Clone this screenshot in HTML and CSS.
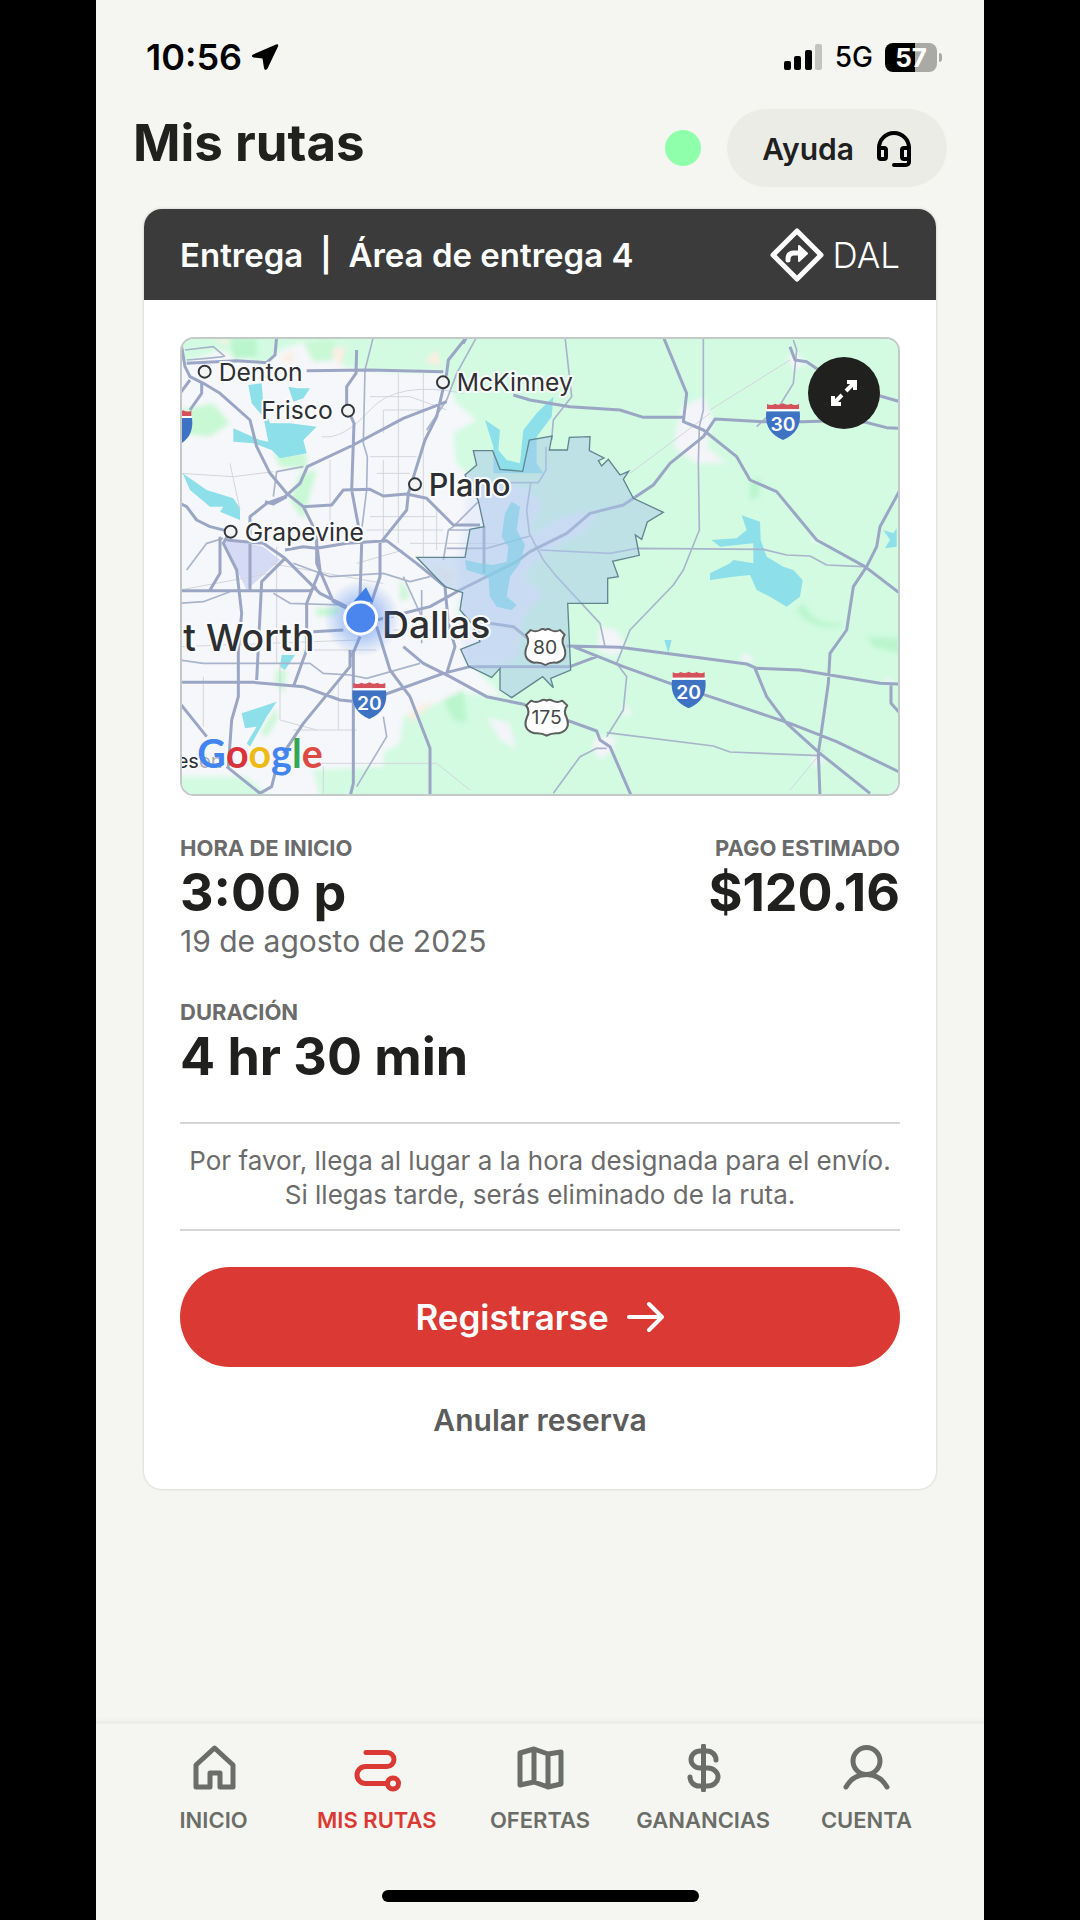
FILE: index.html
```
<!DOCTYPE html>
<html lang="es">
<head>
  <meta charset="UTF-8">
  <meta name="viewport" content="width=device-width, initial-scale=1.0">
  <title>Mis rutas</title>
  <link rel="stylesheet" href="styles.css">
</head>
<body>
  <div class="screen">
    <!-- Status bar -->
    <div class="status-bar">
      <div class="status-time">
        <span>10:56</span>
        <svg class="location-icon" viewBox="0 0 28 28" aria-hidden="true">
          <path d="M25 1.500L2 11.500Q-.5 13.500 2.500 14.500L11.500 15.500 13 25Q14 28.500 16.500 25.500L27 3.500Q28 .5 25 1.500Z"/>
        </svg>
      </div>
      <div class="status-info">
        <svg class="signal-icon" viewBox="0 0 40 28" aria-hidden="true">
          <rect x="1" y="18" width="7" height="9" rx="2"/>
          <rect x="11" y="13" width="7" height="14" rx="2"/>
          <rect x="22" y="7" width="7" height="20" rx="2"/>
          <rect x="32" y="1" width="7" height="26" rx="2" fill="#c3c4bf"/>
        </svg>
        <span class="network">5G</span>
        <div class="battery"><span class="battery-level">57</span></div>
      </div>
    </div>

    <!-- Page header -->
    <header class="header">
      <h1>Mis rutas</h1>
      <span class="online-dot"></span>
      <button class="help-button" type="button">
        Ayuda
        <svg class="help-icon" viewBox="0 0 36 36" aria-hidden="true">
          <path d="M3 24V17a15 15 0 0 1 30 0V31a3 3 0 0 1-3 3H18"/>
          <rect x="3" y="17" width="7" height="11" rx="2"/>
          <rect x="26" y="17" width="7" height="11" rx="2"/>
        </svg>
      </button>
    </header>

    <!-- Route card -->
    <main class="card">
      <div class="card-header">
        <h2>Entrega&nbsp; |&nbsp; Área de entrega 4</h2>
        <div class="station">
          <svg class="station-icon" viewBox="0 0 54 54" aria-hidden="true">
            <path d="M27 3L51 27 27 51 3 27Z" fill="none" stroke="#fff" stroke-width="5" stroke-linejoin="round"/>
            <path d="M18 32V31Q18 25 24 25H31" fill="none" stroke="#fff" stroke-width="5" stroke-linecap="round"/>
            <path d="M29 18L37 25.500 29 33Z" fill="#fff" stroke="#fff" stroke-width="2" stroke-linejoin="round"/>
          </svg>
          <span>DAL</span>
        </div>
      </div>

      <div class="card-body">
        <div class="map">
          <svg class="map-svg" viewBox="36 27 2148 1365" role="img" aria-label="Mapa del área de entrega">
            <defs>
              <radialGradient id="halo">
                <stop offset="0.400" stop-color="#4a86ee" stop-opacity="0.450"/>
                <stop offset="1" stop-color="#4a86ee" stop-opacity="0"/>
              </radialGradient>
              <filter id="soft"><feGaussianBlur stdDeviation="8"/></filter>
              <symbol id="interstate" viewBox="0 0 104 112">
                <path d="M2 26H102C106 60 98 92 52 112C6 92 -2 60 2 26Z" fill="#3e73c4"/>
                <path d="M4 20V4Q18 10 28 3Q40 10 52 2Q64 10 76 3Q86 10 100 4V20Z" fill="#d5515c"/>
                <path d="M2 23H102" stroke="#fff" stroke-width="6"/>
              </symbol>
              <symbol id="us-route" viewBox="0 0 132 118" preserveAspectRatio="none">
                <path d="M22 8Q36 16 50 8 58 2 66 8 74 2 82 8 96 16 110 8L124 22Q112 40 122 58 136 96 100 106 80 104 66 113 52 104 32 106-4 96 10 58 20 40 8 22Z" fill="#fff" stroke="#5c5f5e" stroke-width="6" stroke-linejoin="round"/>
              </symbol>
            </defs>

            <!-- Land -->
            <rect x="30" y="21" width="2160" height="1380" fill="#d2fbe1"/>
            <g filter="url(#soft)">
              <path d="M0 110L150 60 290 105 330 60 420 30 500 40 520 110 640 125 820 125 860 220 920 270 850 310 860 400 900 440 930 520 960 600 880 690 860 860 900 1000 1000 1100 870 1090 780 1130 700 1160 690 1240 640 1270 640 1310 430 1320 450 1400 300 1400 230 1340 0 1340Z" fill="#f6f7fa"/>
              <path d="M900 440L1060 470 1120 520 1070 620 1180 560 1290 540 1250 600 1110 680 1060 740 1120 790 1060 860 1040 980 980 1010 880 1000 860 700Z" fill="#e9effa"/>
              <path d="M30 240L130 220 180 280 120 320 30 310ZM310 370L410 370 410 415 330 410ZM390 430L440 420 400 570 360 510ZM400 35L500 30 490 90 430 95ZM690 740L720 800 690 815ZM435 835L520 830 500 855 440 860ZM320 1020L350 1020 340 1090 315 1060ZM320 1130L320 1170 290 1220 270 1210Z" fill="#c8f8d4"/>
              <path d="M180 25L260 25 260 80 190 90ZM1740 460L1770 440 1765 500 1740 510ZM1900 820Q1930 890 2020 880L2010 890Q1920 900 1880 840ZM2090 920L2190 925 2190 970 2110 950ZM820 1110L880 1080 890 1180 850 1170Z" fill="#b9f5cd"/>
              <path d="M130 25L180 25 170 45ZM325 90L370 60 370 100ZM480 60L530 50 510 110ZM760 95L800 60 815 110ZM720 1140L800 1110 720 1180ZM790 700L860 740 830 760Z" fill="#fbeee2"/>
              <path d="M1535 230L1600 200 1630 270 1610 350 1670 400 1580 400 1510 350 1520 290ZM1850 80L1880 70 1910 100 1870 120ZM1290 890L1340 900 1370 950 1330 980 1280 960ZM1720 970L1750 980 1740 1000 1710 995ZM1280 1220L1340 1220 1330 1260 1290 1290 1265 1250ZM1360 1120L1390 1150 1360 1160ZM1920 1270L1970 1290 1930 1310ZM2150 1040L2180 1060 2140 1060ZM950 1160L1020 1180 1040 1260 990 1230ZM1920 620L1960 630 1930 640Z" fill="#f4f4f9"/>
            </g>
            <path d="M160 640L190 630 280 650 330 690 230 780 190 700Z" fill="#d5daf5"/>

            <!-- Water -->
            <g fill="#8ddfe9">
              <path d="M235 165L275 160 280 225 300 280 360 280 440 290 400 330 410 370 330 385 305 360 250 340 190 335 190 295 270 330 295 335 280 260 245 220ZM355 170L380 175 420 175 400 205 370 215Z"/>
              <path d="M38 430L110 480 190 505 210 535 210 570 150 545 160 530 120 530 60 480Z"/>
              <path d="M335 975L375 975 345 1020 330 1010ZM215 1150L320 1115 290 1160 240 1250 230 1240 260 1190 225 1195Z"/>
              <path d="M945 270L990 300 985 360 1010 390 1050 400 1060 300 1100 250 1150 200 1145 260 1100 320 1100 400 1120 430 970 430 970 350Z"/>
              <path d="M1715 556L1770 575 1772 630 1790 680 1840 710 1870 720 1898 750 1890 800 1850 830 1800 800 1760 780 1740 735 1690 740 1620 750 1620 730 1680 700 1690 690 1750 700 1750 640 1650 650 1625 630 1700 625 1730 600Z"/>
              <path d="M1483 930H1505L1495 970ZM2140 600L2170 610 2180 595V650L2145 655 2160 630Z"/>
            </g>

            <!-- Minor roads -->
            <g class="road-minor">
              <path d="M455 320Q520 330 600 240T880 190M600 200H720L830 240M180 400L210 540M600 380H740M320 650V1000M300 700L640 760M480 390V600M685 130V640M760 130V680M800 540V660M640 390V640M720 640H980M600 560H800M590 600H820M30 780L300 730M30 950L560 930M100 1040V1190M330 1000V1170L440 1200M505 1050V1200M370 1200H560M430 1300H800L900 1380M460 1310V1390M1620 240L1860 90M1380 430L1620 250M1860 1380L1960 1260M30 430L190 440 310 425M640 310V240H760M620 430H720M670 900H800M560 700L700 660M400 960H620"/>
            </g>
            <g class="road-light">
              <path d="M610 21L585 120 580 340 592 380 590 480 575 600M920 21L860 130 830 210 770 300M50 90L110 85 160 80M45 60L130 50 165 80M310 500L320 425 400 410M30 820L100 815 180 785M310 790L360 820 520 825M30 990L100 1000 350 1000 420 1000 460 1030 540 1035 590 1045 750 1000M755 780L755 940M700 740L755 860M370 700L480 740 640 730 720 755 780 740M50 720L110 640 160 625M640 1160L650 1220 560 1370M820 690L835 600 850 590 925 515M835 600L900 600M1185 21L1205 200 1150 270 1145 330M1128 350V420L1105 458H1020M1082 460L1070 540 1078 610 1120 690M1600 21V240L1588 290 1585 400 1588 600 1540 720 1510 765 1380 900 1340 1000 1370 1040 1360 1140 1310 1220M1870 30L1880 60 1870 160 1830 225 1760 290M1120 690L1160 740 1290 880 1305 950M830 655H950L1080 618M1110 660L1320 670 1400 655 1780 658 1850 675 1920 678 1970 705 2080 710M1310 1208L1630 1248 1680 1266 1950 1277M1150 1390L1230 1280 1280 1255 1310 1255"/>
            </g>

            <!-- Highways -->
            <g class="road">
              <path d="M320 21L315 75 290 98 200 92 50 100M30 21L45 110 60 140 100 160 150 190 240 270 260 350 300 430 350 490 400 530 440 610 440 700 490 815 560 850M30 190L60 150M60 240L95 190 95 160M410 122L600 120 820 125M560 60L558 130 530 170 530 230 552 280 545 480 575 640 570 800M890 21L835 90 830 130 800 260 765 330 715 490 710 540 630 640 630 740 600 830M890 21L880 40M830 215L700 265 550 345 412 410 390 460 345 500 290 520 240 560 240 780M350 500L310 522 285 515M400 530L485 525 520 480 600 478 640 498 710 492 770 505 850 585 930 585M942 590V730M30 520L50 530 80 570 120 590 180 605 160 640 200 720 215 850 205 960 205 1100 185 1170 175 1310M150 620L150 730 120 780M170 630L280 640 345 685 400 740 450 790 530 830M345 685L275 755 260 1050M345 660L400 650 440 655 530 640 650 632 740 700 825 770 835 880 855 950 830 1030M440 640L450 720 410 820 410 960 370 1070M30 782H420L440 770M30 1057L250 1057 400 1070 510 1110 560 1115 640 1095 820 1030 900 1010H1200L1280 980M430 905L520 900M540 960L540 1010 400 1180 340 1270M550 960V1360L540 1400M570 920L545 980M620 890L660 1020 720 1100 780 1255V1400M700 950L760 1000 840 1040 950 1100 1060 1123 1280 1203 1290 1230 1320 1250 1385 1400M30 1120L110 1220M170 1310L270 1390 305 1370 320 1310M620 870L780 830 870 780 1040 695 1080 665 1190 610 1260 550 1360 525 1450 465 1500 400 1600 320 1635 267 1780 275 1900 275 2060 270 2150 293 2190 295M1030 195L1080 210 1200 230 1350 240 1420 262 1540 262M1480 21L1550 190 1540 275 1600 300 1700 380 1740 450 1820 485 1940 630 2085 710 2190 790M1860 50L1875 90 1910 95 1960 130 2120 195 2190 215M2190 480L2130 590 2120 650 2090 710 2050 770 2030 900 1980 970 1975 1060 1945 1270 1950 1400M960 880L1030 890 1080 930M1190 948L1290 950 1350 952 1730 1002 1760 1015 1890 1020 2130 1060 2190 1062M1210 950L1360 1010 1500 1060 1620 1100 1860 1180 2000 1235 2190 1327M1755 1015L1790 1100 1850 1180 1950 1270 2100 1390M2163 1060V1120L2190 1150"/>
            </g>

            <!-- Service area -->
            <path class="service-area" d="M910 362L968 362 990 418 1058 424 1078 330 1146 318 1138 360 1192 360 1198 322 1260 320 1258 362 1302 384 1285 392 1295 408 1315 388 1350 435 1376 424 1360 448 1390 505 1480 547 1432 576 1415 628 1396 615 1408 676 1328 694 1345 740 1313 745 1313 820 1193 820 1202 1020 1142 1045 1150 1073 1118 1040 1025 1103 990 1080 990 1015 965 1042 895 1008 872 958 930 935 905 880 870 840 878 788 825 770 740 682 885 682 900 598 942 590 925 512 885 435 920 405Z"/>
            <path d="M1025 515L1050 530 1040 600 1065 645 1050 700 1020 740 1010 800 1040 825 1025 840 980 830 960 800 955 740 890 720 885 690 930 700 970 705 1010 695 1015 650 995 620 1005 550Z" fill="#84cfe6" opacity="0.700"/>

            <!-- City markers and labels -->
            <g class="city-dots">
              <circle cx="104" cy="125" r="18"/>
              <circle cx="534" cy="242" r="18"/>
              <circle cx="819" cy="157" r="18"/>
              <circle cx="735" cy="463" r="18"/>
              <circle cx="182" cy="605" r="18"/>
            </g>
            <g class="city-names">
              <text x="146" y="152">Denton</text>
              <text x="274" y="268">Frisco</text>
              <text x="860" y="184">McKinney</text>
              <text x="224" y="632">Grapevine</text>
              <text class="city-plano" x="776" y="498">Plano</text>
              <text class="city-large" x="636" y="925">Dallas</text>
              <text class="city-large" x="40" y="962">t Worth</text>
              <text class="city-small" x="20" y="1314">es<tspan class="city-faded">on</tspan></text>
            </g>

            <!-- Road shields -->
            <use href="#interstate" x="-37" y="238" width="106" height="112"/>
            <use href="#interstate" x="545" y="1055" width="106" height="112"/>
            <use href="#interstate" x="1503" y="1023" width="106" height="112"/>
            <use href="#interstate" x="1786" y="218" width="106" height="112"/>
            <use href="#us-route" x="1060" y="892" width="132" height="118"/>
            <use href="#us-route" x="1060" y="1104" width="140" height="118"/>
            <g class="shield-text">
              <text x="598" y="1141">20</text>
              <text x="1556" y="1108">20</text>
              <text x="1839" y="304">30</text>
              <text class="us-text" x="1125" y="973">80</text>
              <text class="us-text" x="1130" y="1183">175</text>
            </g>

            <!-- Current position -->
            <circle cx="575" cy="865" r="115" fill="url(#halo)"/>
            <path d="M588 772L610 815H550Z" fill="#3f7ee6"/>
            <circle cx="572" cy="864" r="48" fill="#4a86ee" stroke="#fff" stroke-width="9"/>

            <text class="google" x="82" y="1314"><tspan fill="#4385f0">G</tspan><tspan fill="#d9323a">o</tspan><tspan fill="#edbb14">o</tspan><tspan fill="#4385f0">g</tspan><tspan fill="#35a753">l</tspan><tspan fill="#dd4a43">e</tspan></text>
          </svg>
          <button class="expand-button" type="button" aria-label="Ampliar mapa">
            <svg class="expand-icon" viewBox="0 0 28 28" aria-hidden="true">
              <path d="M16 12L25 3M17 3H25V11M12 16L3 25M3 17V25H11"/>
            </svg>
          </button>
        </div>

        <div class="details">
          <div class="detail">
            <div class="label">HORA DE INICIO</div>
            <div class="value">3:00 p</div>
            <div class="date">19 de agosto de 2025</div>
          </div>
          <div class="detail pay">
            <div class="label">PAGO ESTIMADO</div>
            <div class="value">$120.16</div>
          </div>
          <div class="detail">
            <div class="label">DURACIÓN</div>
            <div class="value">4 hr 30 min</div>
          </div>
        </div>

        <p class="notice">Por favor, llega al lugar a la hora designada para el envío.<br>Si llegas tarde, serás eliminado de la ruta.</p>

        <button class="primary-button" type="button">
          Registrarse
          <svg class="arrow-icon" viewBox="0 0 38 32" aria-hidden="true">
            <path d="M2 16H35M22 3L35 16 22 29"/>
          </svg>
        </button>
        <button class="text-button" type="button">Anular reserva</button>
      </div>
    </main>

    <!-- Bottom navigation -->
    <footer class="bottom">
      <nav class="nav">
        <a class="nav-item" href="#inicio">
          <svg class="nav-icon" viewBox="0 0 48 48" aria-hidden="true">
            <path d="M6 21L24.500 4 43 21V43H30V29H20V43H6Z"/>
          </svg>
          INICIO
        </a>
        <a class="nav-item active" href="#rutas">
          <svg class="nav-icon" viewBox="0 0 48 48" aria-hidden="true">
            <path d="M13 8.500H34a7 7 0 0 1 0 14H12.500a8.500 8.500 0 0 0 0 17H34.500"/>
            <circle cx="40" cy="39.500" r="5.500"/>
          </svg>
          MIS RUTAS
        </a>
        <a class="nav-item" href="#ofertas">
          <svg class="nav-icon" viewBox="0 0 48 48" aria-hidden="true">
            <path d="M4 9L18 5 32 10 45 8V40L32 43 18 38 4 41ZM18 5V38M32 10V43"/>
          </svg>
          OFERTAS
        </a>
        <a class="nav-item" href="#ganancias">
          <svg class="nav-icon" viewBox="0 0 48 48" aria-hidden="true">
            <path d="M24.500 2V46M37 16c0-5-4-9-9-9h-7c-5 0-9 4-9 8.500s4 8.500 9 8.500h8c5 0 10 4 10 9s-5 9-10 9h-9c-5 0-9-4-9-9"/>
          </svg>
          GANANCIAS
        </a>
        <a class="nav-item" href="#cuenta">
          <svg class="nav-icon" viewBox="0 0 48 48" aria-hidden="true">
            <circle cx="24.500" cy="17" r="13.500"/>
            <path d="M4 43C8 36 15 30.500 24.500 30.500S41 36 45 43"/>
          </svg>
          CUENTA
        </a>
      </nav>
      <div class="home-indicator"></div>
    </footer>
  </div>
</body>
</html>
```

FILE: styles.css
```
/* General styling */
* {
  box-sizing: border-box;
}

body {
  margin: 0;
  background: #000;
  color: #20211f;
  font-family: Inter, "Liberation Sans", sans-serif;
}

h1,
h2,
p {
  margin: 0;
}

button {
  border: none;
  font-family: inherit;
  cursor: pointer;
}

svg {
  display: block;
  flex-shrink: 0;
}

.screen {
  display: flex;
  flex-direction: column;
  max-width: 888px;
  min-height: 100vh;
  margin: 0 auto;
  background: #f5f6f1;
}

/* Status bar */
.status-bar {
  display: flex;
  justify-content: space-between;
  align-items: center;
  height: 108px;
  padding: 6px 41px 0 50px;
  color: #000;
}

.status-time {
  display: flex;
  align-items: center;
  gap: 9px;
  font-size: 36px;
  font-weight: 600;
}

.location-icon {
  width: 28px;
  height: 28px;
}

.status-info {
  display: flex;
  align-items: center;
  gap: 12px;
}

.signal-icon {
  width: 40px;
  height: 28px;
}

.network {
  font-size: 28px;
  font-weight: 500;
}

.battery {
  position: relative;
  width: 52px;
  height: 29px;
  margin-right: 6px;
  border-radius: 8px;
  background: linear-gradient(to right, #000 57%, #a9aaa6 57%);
  text-align: center;
}

.battery::after {
  content: "";
  position: absolute;
  top: 10px;
  right: -5px;
  width: 3px;
  height: 9px;
  border-radius: 0 4px 4px 0;
  background: #a9aaa6;
}

.battery-level {
  color: #fff;
  font-size: 26px;
  font-weight: 700;
  line-height: 29px;
}

/* Header */
.header {
  display: flex;
  align-items: center;
  height: 80px;
  padding: 0 37px;
}

.header h1 {
  flex: 1;
  padding-bottom: 11px;
  font-size: 51px;
  font-weight: 700;
}

.online-dot {
  width: 36px;
  height: 36px;
  margin-right: 26px;
  border-radius: 50%;
  background: #90ffac;
}

.help-button {
  display: flex;
  align-items: center;
  gap: 22px;
  height: 78px;
  padding: 2px 35px 0;
  border-radius: 40px;
  background: #ecece7;
  color: #20211f;
  font-size: 30px;
  font-weight: 600;
}

.help-icon {
  width: 36px;
  height: 36px;
  fill: none;
  stroke: #000;
  stroke-width: 4;
  stroke-linecap: round;
}

/* Card */
.card {
  margin: 21px 48px 24px;
  border-radius: 18px;
  background: #fff;
  box-shadow: 0 0 3px rgba(0, 0, 0, 0.2);
  overflow: hidden;
}

.card-header {
  display: flex;
  justify-content: space-between;
  align-items: center;
  height: 91px;
  padding: 0 36px;
  background: #3b3b3b;
  color: #fff;
}

.card-header h2 {
  font-size: 33px;
  font-weight: 600;
}

.station {
  display: flex;
  align-items: center;
  gap: 9px;
  font-size: 35px;
  font-weight: 300;
}

.station-icon {
  width: 54px;
  height: 54px;
}

.card-body {
  padding: 37px 36px 35px;
}

/* Map */
.map {
  position: relative;
  border: 2px solid #c3c9c8;
  border-radius: 14px;
  overflow: hidden;
}

.map-svg {
  width: 100%;
  height: auto;
}

.road,
.road-light,
.road-minor {
  fill: none;
  stroke-linejoin: round;
}

.road {
  stroke: #9ba6c4;
  stroke-width: 9;
}

.road-light {
  stroke: #a9b4cc;
  stroke-width: 5;
}

.road-minor {
  stroke: #d3d5dc;
  stroke-width: 3;
}

.service-area {
  fill: rgba(170, 200, 235, 0.5);
  stroke: #5f8790;
  stroke-width: 4;
}

.city-dots {
  fill: #f4f4f4;
  stroke: #33363a;
  stroke-width: 6;
}

.city-names {
  fill: #2d2f33;
  stroke: #fafbfc;
  stroke-width: 12;
  stroke-linejoin: round;
  paint-order: stroke;
  font-size: 74px;
}

.city-small {
  font-size: 60px;
}

.city-faded {
  fill: #a9adb5;
}

.city-plano {
  font-size: 92px;
  font-weight: 500;
}

.city-large {
  font-size: 112px;
  font-weight: 500;
}

.shield-text {
  fill: #fff;
  stroke: none;
  font-size: 58px;
  font-weight: 600;
  text-anchor: middle;
}

.us-text {
  fill: #444746;
  font-weight: 400;
}

.google {
  font-family: Lato, sans-serif;
  font-size: 118px;
  font-weight: 700;
}

.expand-button {
  position: absolute;
  top: 18px;
  right: 18px;
  display: flex;
  justify-content: center;
  align-items: center;
  width: 72px;
  height: 72px;
  padding: 0;
  border-radius: 50%;
  background: #20211f;
}

.expand-icon {
  width: 28px;
  height: 28px;
  fill: none;
  stroke: #fff;
  stroke-width: 4;
}

/* Route details */
.details {
  display: grid;
  grid-template-columns: 1fr auto;
  row-gap: 36px;
  padding: 36px 0;
}

.pay {
  text-align: right;
}

.label {
  color: #6b6b6b;
  font-size: 22px;
  font-weight: 700;
  line-height: 32px;
}

.value {
  font-size: 52px;
  font-weight: 700;
  line-height: 58px;
}

.date {
  color: #6b6b6b;
  font-size: 30px;
  line-height: 38px;
}

.notice {
  padding: 20px 0 17px;
  border-top: 2px solid #d6d6d6;
  border-bottom: 2px solid #d6d6d6;
  color: #6b6b6b;
  font-size: 26px;
  line-height: 34px;
  text-align: center;
}

/* Buttons */
.primary-button {
  display: flex;
  justify-content: center;
  align-items: center;
  gap: 18px;
  width: 100%;
  height: 100px;
  margin-top: 36px;
  border-radius: 50px;
  background: #da3a33;
  color: #fff;
  font-size: 35px;
  font-weight: 600;
}

.arrow-icon {
  width: 38px;
  height: 32px;
  fill: none;
  stroke: #fff;
  stroke-width: 4;
  stroke-linecap: round;
  stroke-linejoin: round;
}

.text-button {
  display: block;
  margin: 19px auto 0;
  padding: 0 20px;
  background: none;
  color: #5c5c5c;
  font-size: 30px;
  font-weight: 600;
  line-height: 68px;
}

/* Bottom navigation */
.bottom {
  margin-top: auto;
  padding-bottom: 18px;
  border-top: 3px solid #ecede8;
  box-shadow: 0 -1px 4px rgba(0, 0, 0, 0.04);
}

.nav {
  display: grid;
  grid-template-columns: repeat(5, 1fr);
  padding: 20px 36px 54px;
}

.nav-item {
  display: flex;
  flex-direction: column;
  align-items: center;
  gap: 12px;
  color: #6b6d68;
  font-size: 22px;
  font-weight: 600;
  line-height: 32px;
  text-decoration: none;
}

.nav-item.active {
  color: #da3a33;
}

.nav-icon {
  width: 48px;
  height: 48px;
  fill: none;
  stroke: currentColor;
  stroke-width: 5;
  stroke-linecap: round;
  stroke-linejoin: round;
}

.home-indicator {
  width: 317px;
  height: 12px;
  margin: 0 auto;
  border-radius: 6px;
  background: #000;
}
```
